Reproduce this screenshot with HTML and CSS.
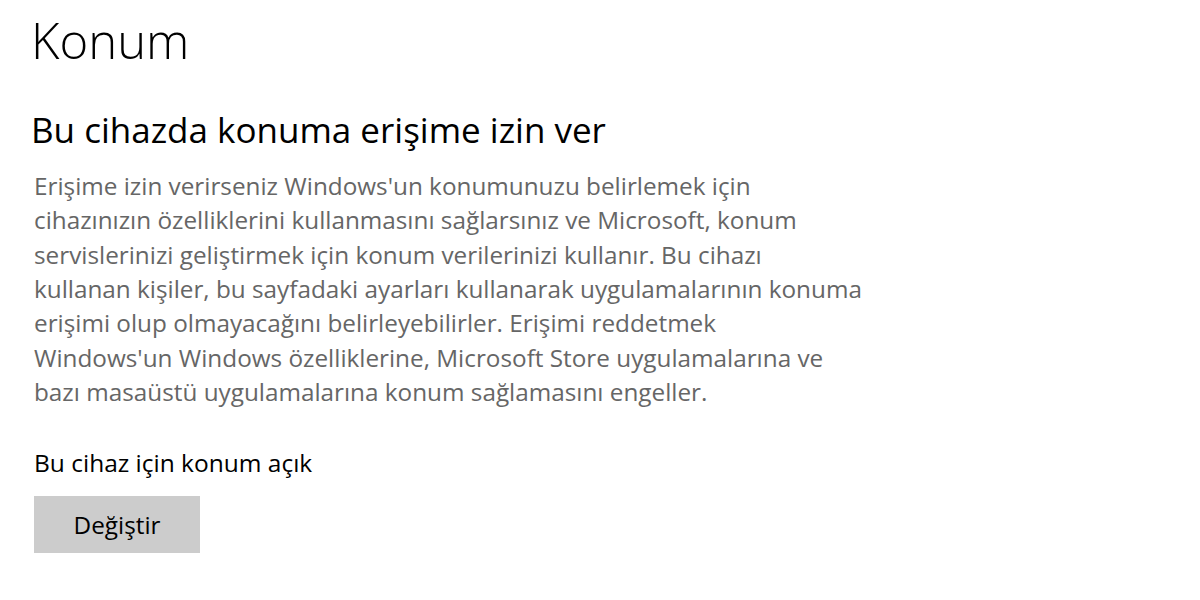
FILE: index.html
```html
<!DOCTYPE html>
<html lang="tr">
<head>
<meta charset="utf-8">
<title>Konum</title>
<link rel="stylesheet" href="styles.css">
</head>
<body>
<main class="page">
  <h1 class="title">Konum</h1>
  <h2 class="subtitle">Bu cihazda konuma erişime izin ver</h2>
  <p class="desc">Erişime izin verirseniz Windows'un konumunuzu belirlemek için<br>cihazınızın özelliklerini kullanmasını sağlarsınız ve Microsoft, konum<br>servislerinizi geliştirmek için konum verilerinizi kullanır. Bu cihazı<br>kullanan kişiler, bu sayfadaki ayarları kullanarak uygulamalarının konuma<br>erişimi olup olmayacağını belirleyebilirler. Erişimi reddetmek<br>Windows'un Windows özelliklerine, Microsoft Store uygulamalarına ve<br>bazı masaüstü uygulamalarına konum sağlamasını engeller.</p>
  <p class="status">Bu cihaz için konum açık</p>
  <button class="btn" type="button">Değiştir</button>
</main>
</body>
</html>
```
FILE: styles.css
```css
html, body {
  margin: 0;
  padding: 0;
  background: #ffffff;
}
body {
  font-family: "Open Sans", "Noto Sans", "DejaVu Sans", sans-serif;
  color: #000;
}
.page {
  display: flex;
  flex-direction: column;
  align-items: flex-start;
  padding: 8px 0 0 31px;
}
.title {
  margin: 0;
  font-size: 49px;
  font-weight: 300;
  line-height: 64px;
}
.subtitle {
  margin: 35px 0 0 0;
  font-size: 35px;
  font-weight: 400;
  line-height: 46px;
}
.desc {
  margin: 16px 0 0 3px;
  font-size: 24.3px;
  line-height: 34.33px;
  color: #666666;
}
.status {
  margin: 37px 0 0 3px;
  font-size: 24.5px;
  line-height: 34px;
}
.btn {
  margin: 16px 0 0 3px;
  width: 166px;
  height: 57px;
  border: none;
  background: #cccccc;
  font-family: inherit;
  font-size: 24.3px;
  color: #000;
  padding: 0;
}
```
